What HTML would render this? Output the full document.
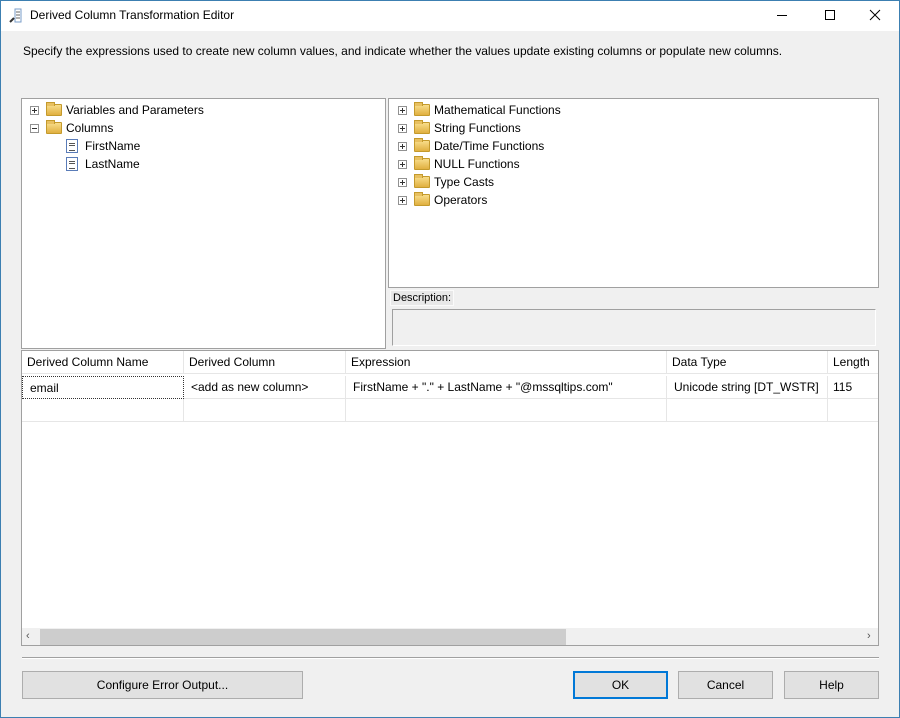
<!DOCTYPE html><html><head><style>
*{box-sizing:border-box;margin:0;padding:0}
body{width:900px;height:718px;overflow:hidden;font-family:"Liberation Sans",sans-serif;font-size:12px;color:#000;background:#f0f0f0;position:relative}
.win{position:absolute;left:0;top:0;width:900px;height:718px;background:#f0f0f0}
.frame{position:absolute;left:0;top:0;width:900px;height:718px;border:1px solid #3c7fb1;pointer-events:none}
.title{position:absolute;left:0;top:0;width:900px;height:31px;background:#fff}
.abs{position:absolute}
.box{position:absolute;background:#fff;border:1px solid #a0a0a0}
.tr{position:absolute;height:18px;line-height:18px;white-space:nowrap}
.pm{position:absolute;width:9px;height:9px;border:1px solid #919191;background:#fff;top:5px}
.pm:before{content:"";position:absolute;left:1px;top:3px;width:5px;height:1px;background:#333}
.pm.p:after{content:"";position:absolute;left:3px;top:1px;width:1px;height:5px;background:#333}
.fold{position:absolute;top:3px;width:16px;height:12px;background:linear-gradient(#f8dd8a,#e0b040);border:1px solid #c49a2c;border-radius:1px}
.fold:before{content:"";position:absolute;left:-1px;top:-3px;width:7px;height:3px;background:#e8c060;border:1px solid #c49a2c;border-bottom:none}
.col{position:absolute;top:2px;width:12px;height:14px;border:1px solid #5a7cb8;background:#fff}
.col:before{content:"";position:absolute;left:2px;top:3px;width:6px;height:6px;border-top:1px solid #555;border-bottom:1px solid #555}
.col:after{content:"";position:absolute;left:2px;top:5px;width:6px;height:1px;background:#555}
.g{position:absolute;border-right:1px solid #e6e6e6;border-bottom:1px solid #e6e6e6;height:23px;line-height:22px;padding-left:5px;white-space:nowrap}
.btn{position:absolute;top:671px;height:28px;border:1px solid #adadad;background:#e1e1e1;text-align:center;line-height:26px;font-size:12px}
</style></head><body><div class="win">
<div class="title">
 <svg class="abs" style="left:9px;top:8px" width="14" height="16"><rect x="6" y="1" width="6" height="13" fill="#fff" stroke="#7a9cc8"/><line x1="7" y1="4" x2="11" y2="4" stroke="#666"/><line x1="7" y1="7" x2="11" y2="7" stroke="#666"/><line x1="7" y1="10" x2="11" y2="10" stroke="#666"/><path d="M1 14 L5 10" stroke="#333" stroke-width="2"/></svg>
 <div class="abs" style="left:30px;top:8px;font-size:12px">Derived Column Transformation Editor</div>
 <div class="abs" style="left:777px;top:15px;width:10px;height:1px;background:#000"></div>
 <div class="abs" style="left:825px;top:10px;width:10px;height:10px;border:1px solid #000"></div>
 <svg class="abs" style="left:869px;top:9px" width="12" height="12"><path d="M1 1L11 11M11 1L1 11" stroke="#000"/></svg>
</div>
<div class="abs" style="left:23px;top:44px">Specify the expressions used to create new column values, and indicate whether the values update existing columns or populate new columns.</div>

<div class="box" style="left:21px;top:98px;width:365px;height:251px">
 <div class="tr" style="left:0;top:2px;width:300px"><div class="pm p" style="left:8px"></div><div class="fold" style="left:24px"></div><span class="abs" style="left:44px">Variables and Parameters</span></div>
 <div class="tr" style="left:0;top:20px;width:300px"><div class="pm" style="left:8px"></div><div class="fold" style="left:24px"></div><span class="abs" style="left:44px">Columns</span></div>
 <div class="tr" style="left:0;top:38px;width:300px"><div class="col" style="left:44px"></div><span class="abs" style="left:63px">FirstName</span></div>
 <div class="tr" style="left:0;top:56px;width:300px"><div class="col" style="left:44px"></div><span class="abs" style="left:63px">LastName</span></div>
</div>
<div class="box" style="left:388px;top:98px;width:491px;height:190px">
 <div class="tr" style="left:0;top:2px;width:300px"><div class="pm p" style="left:9px"></div><div class="fold" style="left:25px"></div><span class="abs" style="left:45px">Mathematical Functions</span></div>
 <div class="tr" style="left:0;top:20px;width:300px"><div class="pm p" style="left:9px"></div><div class="fold" style="left:25px"></div><span class="abs" style="left:45px">String Functions</span></div>
 <div class="tr" style="left:0;top:38px;width:300px"><div class="pm p" style="left:9px"></div><div class="fold" style="left:25px"></div><span class="abs" style="left:45px">Date/Time Functions</span></div>
 <div class="tr" style="left:0;top:56px;width:300px"><div class="pm p" style="left:9px"></div><div class="fold" style="left:25px"></div><span class="abs" style="left:45px">NULL Functions</span></div>
 <div class="tr" style="left:0;top:74px;width:300px"><div class="pm p" style="left:9px"></div><div class="fold" style="left:25px"></div><span class="abs" style="left:45px">Type Casts</span></div>
 <div class="tr" style="left:0;top:92px;width:300px"><div class="pm p" style="left:9px"></div><div class="fold" style="left:25px"></div><span class="abs" style="left:45px">Operators</span></div>
</div>
<div class="abs" style="left:390px;top:290px;width:64px;height:16px;background:#e8e8e8;border:1px solid #fafafa;font-size:11px;line-height:14px;padding-left:2px">Description:</div>
<div class="abs" style="left:392px;top:309px;width:484px;height:37px;border:1px solid #a0a0a0;border-right-color:#fff;border-bottom-color:#fff;background:#f0f0f0"></div>

<div class="box" style="left:21px;top:350px;width:858px;height:296px;overflow:hidden">
 <div class="g" style="left:0;top:0;width:162px">Derived Column Name</div>
 <div class="g" style="left:162px;top:0;width:162px">Derived Column</div>
 <div class="g" style="left:324px;top:0;width:321px">Expression</div>
 <div class="g" style="left:645px;top:0;width:161px">Data Type</div>
 <div class="g" style="left:806px;top:0;width:60px">Length</div>
 <div class="g" style="left:0;top:25px;width:162px;border:1px dotted #333;padding-left:7px;height:23px">email</div>
 <div class="g" style="left:162px;top:25px;width:162px;padding-left:7px">&lt;add as new column&gt;</div>
 <div class="g" style="left:324px;top:25px;width:321px;padding-left:7px">FirstName + "." + LastName + "@mssqltips.com"</div>
 <div class="g" style="left:645px;top:25px;width:161px;padding-left:7px">Unicode string [DT_WSTR]</div>
 <div class="g" style="left:806px;top:25px;width:60px">115</div>
 <div class="g" style="left:0;top:48px;width:162px"></div>
 <div class="g" style="left:162px;top:48px;width:162px"></div>
 <div class="g" style="left:324px;top:48px;width:321px"></div>
 <div class="g" style="left:645px;top:48px;width:161px"></div>
 <div class="g" style="left:806px;top:48px;width:60px"></div>
 <div class="abs" style="left:0;top:277px;width:856px;height:18px;background:#f0f0f0"></div>
 <div class="abs" style="left:18px;top:278px;width:526px;height:16px;background:#cdcdcd"></div>
 <div class="abs" style="left:4px;top:279px;font-size:11px;color:#555">&#8249;</div>
 <div class="abs" style="left:845px;top:279px;font-size:11px;color:#555">&#8250;</div>
</div>
<div class="abs" style="left:22px;top:657px;width:857px;height:1px;background:#a0a0a0"></div>
<div class="abs" style="left:22px;top:658px;width:857px;height:1px;background:#fff"></div>
<div class="btn" style="left:22px;width:281px">Configure Error Output...</div>
<div class="btn" style="left:573px;width:95px;border:2px solid #0078d7;line-height:24px">OK</div>
<div class="btn" style="left:678px;width:95px">Cancel</div>
<div class="btn" style="left:784px;width:95px">Help</div>
</div><div class="frame"></div></body></html>
